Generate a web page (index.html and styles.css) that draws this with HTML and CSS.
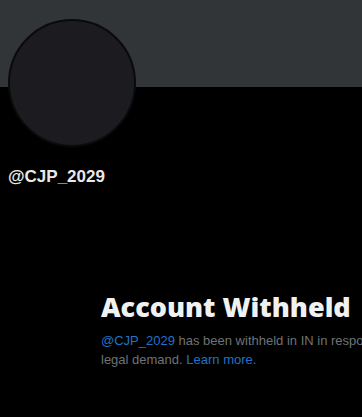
FILE: index.html
```html
<!DOCTYPE html>
<html>
<head>
<meta charset="utf-8">
<link rel="stylesheet" href="styles.css">
</head>
<body>
<div class="page">
  <div class="banner"></div>
  <div class="profile">
    <div class="avatar"></div>
    <div class="handle">@CJP_2029</div>
  </div>
  <div class="withheld">
    <h1 class="title">Account Withheld</h1>
    <p class="desc"><span class="link">@CJP_2029</span> has been withheld in IN in response to a legal demand. <span class="link">Learn more.</span></p>
  </div>
</div>
</body>
</html>
```
FILE: styles.css
```css
html, body {
  margin: 0;
  padding: 0;
  background: #000;
  overflow: hidden;
}
.page {
  width: 362px;
  height: 417px;
  overflow: hidden;
  font-family: "Liberation Sans", Arial, sans-serif;
}
.banner {
  height: 87px;
  background: #323538;
}
.profile {
  padding-left: 8px;
}
.avatar {
  width: 124px;
  height: 124px;
  margin-top: -68px;
  border-radius: 50%;
  background: #1c1c20;
  border: 2px solid #0a0a0c;
}
.handle {
  margin-top: 20px;
  color: #e9e9ea;
  font-weight: bold;
  font-size: 17px;
  line-height: 20px;
}
.withheld {
  margin-top: 103px;
  margin-left: 101px;
  width: 330px;
}
.title {
  margin: 0;
  color: #eff1f3;
  font-family: "Open Sans", "Liberation Sans", sans-serif;
  font-size: 27px;
  font-weight: 800;
  line-height: 34px;
  white-space: nowrap;
}
.desc {
  margin: 7px 0 0;
  color: #6f7377;
  font-size: 13px;
  line-height: 19px;
}
.link {
  color: #2272c8;
}
```
